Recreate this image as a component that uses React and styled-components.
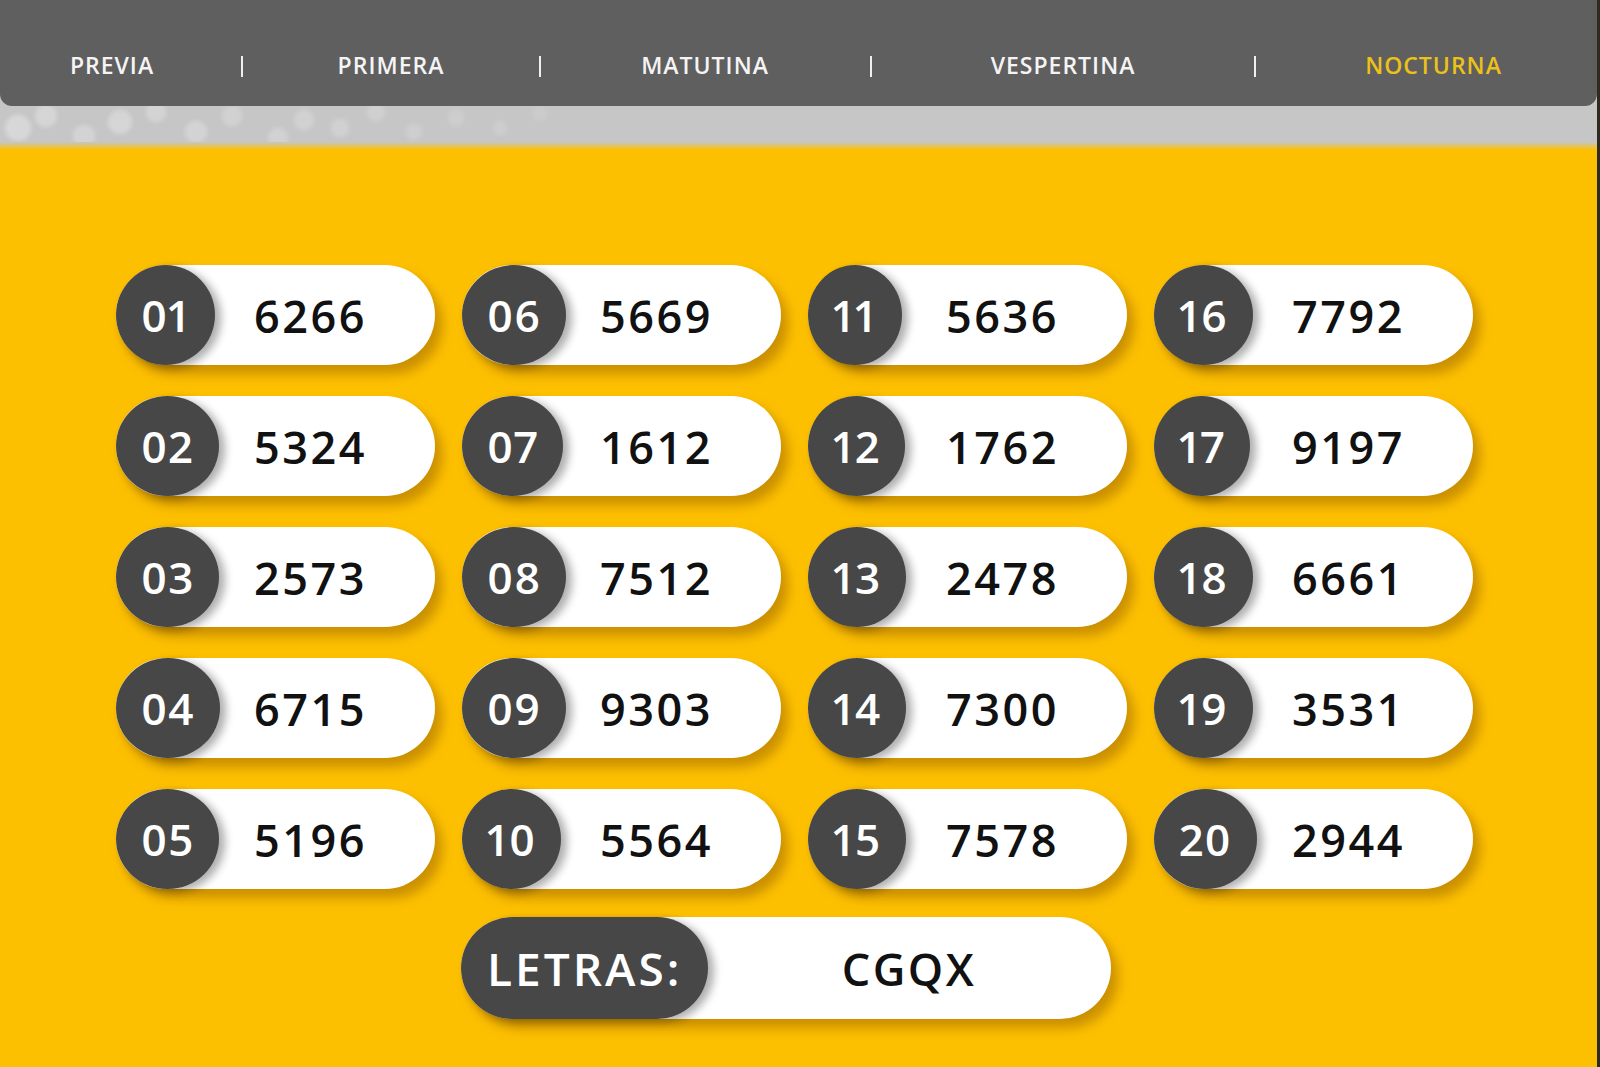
import React from 'react';
import styled, { createGlobalStyle } from 'styled-components';

const GlobalStyle = createGlobalStyle`
  html, body {
    margin: 0;
    padding: 0;
    background: #2e2a20;
  }
  body {
    font-family: "Open Sans", "Liberation Sans", sans-serif;
  }
`;

const Page = styled.div`
  width: 1597px;
  height: 1067px;
  overflow: hidden;
  background: #fdc000;
  display: flex;
  flex-direction: column;
`;

// soft bokeh spots on the grey strip under the menu
const spots = [
  [18, 128, 14, 0.45], [46, 116, 12, 0.4], [84, 136, 12, 0.35], [120, 122, 13, 0.4],
  [156, 112, 11, 0.35], [196, 132, 12, 0.35], [232, 116, 11, 0.3], [278, 138, 11, 0.3],
  [304, 120, 11, 0.3], [340, 128, 10, 0.28], [376, 112, 10, 0.25], [414, 132, 9, 0.22],
  [456, 118, 9, 0.2], [500, 128, 8, 0.18], [540, 114, 8, 0.14],
];

const Header = styled.header`
  height: 146px;
  flex: 0 0 auto;
  background-color: #c6c6c6;
  background-image: ${spots
    .map(([x, y, r, a]) => `radial-gradient(circle at ${x}px ${y}px, rgba(236,236,236,${a}) 0, rgba(236,236,236,${a}) ${r - 4}px, transparent ${r + 2}px)`)
    .join(', ')};
  position: relative;
  &::after {
    content: '';
    display: block;
    position: absolute;
    left: 0;
    right: 0;
    bottom: -4px;
    height: 8px;
    background: linear-gradient(#c6c6c6, #fdc000);
  }
`;

const Nav = styled.nav`
  height: 106px;
  box-sizing: border-box;
  padding-top: 24px;
  background: #5f5f5f;
  border-radius: 0 0 12px 12px;
  display: grid;
  grid-template-columns: 224px 36px 262px 36px 294px 38px 346px 38px 319px;
  align-items: center;
  position: relative;
  z-index: 1;
`;

const NavLink = styled.a`
  justify-self: center;
  font-family: "Open Sans", "Liberation Sans", sans-serif;
  font-weight: 600;
  font-size: 23px;
  letter-spacing: 1px;
  color: ${p => (p.$active ? '#ecc11a' : '#f4f4f4')};
  text-decoration: none;
`;

const Divider = styled.span`
  justify-self: center;
  width: 2px;
  height: 21px;
  background: #efefef;
  margin-top: 3px;
`;

const Main = styled.main`
  padding: 119px 0 0 116px;
  display: flex;
  flex-direction: column;
  gap: 28px;
`;

const Grid = styled.div`
  display: grid;
  grid-template-columns: repeat(4, 319px);
  grid-template-rows: repeat(5, 100px);
  grid-auto-flow: column;
  column-gap: 27px;
  row-gap: 31px;
`;

const Pill = styled.div`
  display: grid;
  align-items: center;
  height: ${p => p.$h || 100}px;
  width: ${p => (p.$w ? `${p.$w}px` : 'auto')};
  background: #fff;
  border-radius: 52px;
  box-shadow: 7px 9px 12px rgba(140, 85, 0, 0.45);
`;

const Ball = styled.div`
  grid-area: 1 / 1;
  justify-self: start;
  height: 100%;
  padding: 0 ${p => p.$pad || 25}px;
  box-sizing: border-box;
  display: flex;
  align-items: center;
  justify-content: center;
  background: #474747;
  border-radius: ${p => p.$radius || '50%'};
  box-shadow: 6px 3px 9px rgba(0, 0, 0, 0.32);
  color: #fff;
  font-family: "Open Sans", "Liberation Sans", sans-serif;
  font-weight: 600;
  font-size: ${p => p.$size || 44}px;
  font-variant-numeric: proportional-nums;
  letter-spacing: ${p => p.$spacing || 1}px;
  position: relative;
  z-index: 1;
`;

const Value = styled.div`
  grid-area: 1 / 1;
  padding-left: ${p => p.$offset || 70}px;
  text-align: center;
  color: #111;
  font-family: "Open Sans", "Liberation Sans", sans-serif;
  font-weight: 600;
  font-size: ${p => p.$size || 45}px;
  letter-spacing: 2.5px;
  line-height: 1;
`;

const LetterRow = styled.div`
  padding-left: 345px;
`;

const results = [
  '6266', '5324', '2573', '6715', '5196',
  '5669', '1612', '7512', '9303', '5564',
  '5636', '1762', '2478', '7300', '7578',
  '7792', '9197', '6661', '3531', '2944',
];

const tabs = ['PREVIA', 'PRIMERA', 'MATUTINA', 'VESPERTINA', 'NOCTURNA'];

export default function App() {
  return (
    <>
      <GlobalStyle />
      <Page>
        <Header>
          <Nav>
            {tabs.map((t, i) => (
              <React.Fragment key={t}>
                {i > 0 && <Divider />}
                <NavLink href="#" $active={t === 'NOCTURNA'}>{t}</NavLink>
              </React.Fragment>
            ))}
          </Nav>
        </Header>
        <Main>
          <Grid>
            {results.map((n, i) => (
              <Pill key={i}>
                <Ball>{String(i + 1).padStart(2, '0')}</Ball>
                <Value>{n}</Value>
              </Pill>
            ))}
          </Grid>
          <LetterRow>
            <Pill $w={650} $h={102}>
              <Ball $radius="51px" $pad={26} $size={46} $spacing={3}>LETRAS:</Ball>
              <Value $offset={246}>CGQX</Value>
            </Pill>
          </LetterRow>
        </Main>
      </Page>
    </>
  );
}
